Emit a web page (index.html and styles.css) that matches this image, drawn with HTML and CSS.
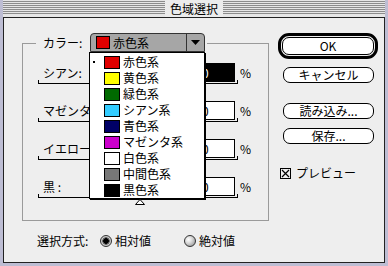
FILE: index.html
```html
<!DOCTYPE html>
<html lang="ja">
<head>
    <meta charset="UTF-8">
    <title>色域選択</title>
    <link rel="stylesheet" href="styles.css">
</head>
<body>
    <div class="window">
        <div class="titlebar"><span class="title">色域選択</span></div>

        <div class="dialog">
            <div class="main">
                <!-- カラー -->
                <fieldset class="group">
                    <legend class="group-head">
                        <span class="group-label">カラー:</span>
                        <span class="picker">
                            <span class="picker-value"><span class="swatch red"></span>赤色系</span>
                            <span class="picker-arrow">
                                <svg width="9" height="5" viewBox="0 0 9 5"><polygon points="0,0 9,0 4.5,5" fill="#000"/></svg>
                            </span>

                            <ul class="menu">
                                <li><span class="mark"><span class="dot"></span></span><span class="swatch red"></span>赤色系</li>
                                <li><span class="mark"></span><span class="swatch yellow"></span>黄色系</li>
                                <li><span class="mark"></span><span class="swatch green"></span>緑色系</li>
                                <li><span class="mark"></span><span class="swatch cyan"></span>シアン系</li>
                                <li><span class="mark"></span><span class="swatch blue"></span>青色系</li>
                                <li><span class="mark"></span><span class="swatch magenta"></span>マゼンタ系</li>
                                <li><span class="mark"></span><span class="swatch white"></span>白色系</li>
                                <li><span class="mark"></span><span class="swatch gray"></span>中間色系</li>
                                <li><span class="mark"></span><span class="swatch black"></span>黒色系</li>
                                <svg class="menu-tri" width="10" height="6" viewBox="0 0 10 6"><polygon points="5,0.5 9.5,5.5 0.5,5.5" fill="#fff" stroke="#000"/></svg>
                            </ul>
                        </span>
                    </legend>

                    <div class="row">
                        <div class="line">
                            <span class="label">シアン:</span>
                            <span class="field selected">0</span>
                            <span class="pct">%</span>
                        </div>
                        <div class="bracket"></div>
                    </div>
                    <div class="row">
                        <div class="line">
                            <span class="label">マゼンタ:</span>
                            <span class="field">0</span>
                            <span class="pct">%</span>
                        </div>
                        <div class="bracket"></div>
                    </div>
                    <div class="row">
                        <div class="line">
                            <span class="label">イエロー:</span>
                            <span class="field">0</span>
                            <span class="pct">%</span>
                        </div>
                        <div class="bracket"></div>
                    </div>
                    <div class="row">
                        <div class="line">
                            <span class="label">黒 :</span>
                            <span class="field">0</span>
                            <span class="pct">%</span>
                        </div>
                        <div class="bracket"></div>
                    </div>
                </fieldset>

                <!-- ボタン -->
                <div class="side">
                    <div class="default-ring"><div class="btn btn-ok">OK</div></div>
                    <div class="btn btn-cancel">キャンセル</div>
                    <div class="btn btn-load">読み込み...</div>
                    <div class="btn btn-save">保存...</div>
                    <div class="check">
                        <span class="check-box">
                            <svg width="9" height="9" viewBox="0 0 9 9"><path d="M1 1L8 8M8 1L1 8" stroke="#000" stroke-width="1.2"/></svg>
                        </span>
                        プレビュー
                    </div>
                </div>
            </div>

            <!-- 選択方式 -->
            <div class="mode">
                <span class="mode-label">選択方式:</span>
                <span class="opt opt-first"><span class="radio on"></span>相対値</span>
                <span class="opt"><span class="radio"></span>絶対値</span>
            </div>
        </div>
    </div>
</body>
</html>
```

FILE: styles.css
```css
/* 基本 */
* {
    box-sizing: border-box;
}

body {
    margin: 0;
    font-family: "Noto Sans CJK JP", "Noto Sans", sans-serif;
    font-size: 12px;
    line-height: 16px;
    color: #000;
    background: #bdbdd3;
}

/* ウィンドウ枠 */
.window {
    width: 388px;
    height: 266px;
    padding: 0 3px 3px;
    background: #bdbdd3;
}

.titlebar {
    height: 17px;
    display: flex;
    justify-content: center;
    background-color: #e6e6e6;
    background-image: repeating-linear-gradient(#8c8c8c 0 1px, #e6e6e6 1px 2px);
    background-size: 100% 14px;
    background-position: 0 1px;
    background-repeat: no-repeat;
}

.title {
    padding: 0 5px;
    background: #ececec;
    line-height: 17px;
}

.dialog {
    height: 246px;
    border: 1px solid #222;
    background: #eeeeee;
    padding: 15px 0 0 18px;
}

.main {
    display: flex;
    align-items: flex-start;
}

/* カラーグループ */
.group {
    margin: 0;
    width: 247px;
    min-width: 0;
    border: 1px solid #9a9a9a;
    padding: 9px 0 22px 13px;
}

.group-head {
    display: flex;
    align-items: flex-start;
    padding: 0 2px 2px 7px;
}

.group-label {
    width: 47px;
    line-height: 19px;
}

.picker {
    position: relative;
    display: flex;
    width: 115px;
    height: 19px;
    border: 1px solid #333;
    border-radius: 4px 4px 0 0;
    background: #a6a6a6;
}

.picker-value {
    flex: 1;
    display: flex;
    align-items: center;
    padding-left: 5px;
}

.picker-value .swatch {
    width: 14px;
    height: 13px;
    margin-right: 3px;
}

.picker-arrow {
    width: 18px;
    border-left: 1px solid #333;
    display: flex;
    align-items: center;
    justify-content: center;
}

.swatch {
    display: inline-block;
    border: 1px solid #000;
}

.red { background: #e00000; }
.yellow { background: #ffff00; }
.green { background: #006a00; }
.cyan { background: #33ccff; }
.blue { background: #000066; }
.magenta { background: #cc00cc; }
.white { background: #ffffff; }
.gray { background: #777777; }
.black { background: #000000; }

/* ポップアップメニュー */
.menu {
    position: absolute;
    left: -2px;
    top: 18px;
    width: 116px;
    margin: 0;
    padding: 1px 0 0;
    list-style: none;
    border: 1px solid #000;
    background: #fff;
    box-shadow: 1px 1px 0 #000;
    z-index: 2;
}

.menu li {
    display: flex;
    align-items: center;
    height: 16px;
}

.mark {
    width: 14px;
    display: flex;
    align-items: center;
}

.dot {
    width: 2px;
    height: 2px;
    margin-left: 3px;
    background: #000;
}

.menu .swatch {
    width: 16px;
    height: 13px;
    margin-right: 3px;
}

.menu-tri {
    position: absolute;
    left: 45px;
    top: calc(100% + 1px);
}

/* 入力行 */
.row {
    margin-left: 2px;
}

.row + .row {
    margin-top: 17px;
}

.line {
    display: flex;
    align-items: center;
    height: 19px;
}

.label {
    width: 159px;
    padding-left: 5px;
    white-space: nowrap;
}

.field {
    width: 38px;
    height: 19px;
    border: 1px solid #000;
    background: #fff;
    padding-left: 4px;
    line-height: 17px;
}

.field.selected {
    background: #000;
    color: #fff;
}

.pct {
    margin-left: 5px;
}

.bracket {
    width: 200px;
    height: 4px;
    margin-top: -2px;
    border: 1px solid #000;
    border-top: 0;
}

/* 右側ボタン */
.side {
    margin-left: 9px;
    width: 100px;
    display: flex;
    flex-direction: column;
}

.default-ring {
    width: 100px;
    border: 3px solid #000;
    border-radius: 11px;
    padding: 1px;
}

.btn {
    height: 16px;
    border: 1px solid #000;
    border-radius: 7px;
    background: #fff;
    text-align: center;
    line-height: 14px;
}

.btn-ok {
    height: 18px;
    line-height: 16px;
}

.btn-cancel,
.btn-load,
.btn-save {
    width: 91px;
    margin-left: 5px;
}

.btn-cancel { margin-top: 8px; }
.btn-load { margin-top: 20px; }
.btn-save { margin-top: 9px; }

.check {
    margin: 21px 0 0 2px;
    display: flex;
    align-items: center;
}

.check-box {
    width: 11px;
    height: 11px;
    margin-right: 5px;
    border: 1px solid #000;
    background: #eee;
    display: flex;
    align-items: center;
    justify-content: center;
}

/* 選択方式 */
.mode {
    display: flex;
    align-items: center;
    margin-top: 12px;
    padding-left: 15px;
}

.mode-label {
    width: 63px;
}

.opt {
    display: flex;
    align-items: center;
}

.opt-first {
    width: 84px;
}

.radio {
    width: 12px;
    height: 12px;
    margin-right: 3px;
    border: 1px solid #333;
    border-radius: 50%;
    background: radial-gradient(circle at 35% 35%, #fff 0, #ddd 35%, #888 100%);
}

.radio.on {
    background: radial-gradient(circle, #000 0 2.5px, #666 3px 3.5px, #ccc 4px);
}
```
